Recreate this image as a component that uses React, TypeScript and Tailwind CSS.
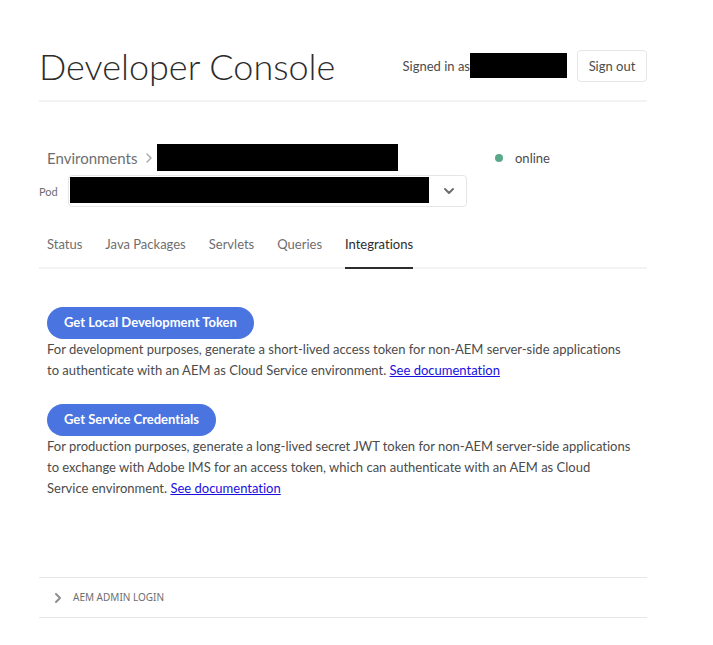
import { ChevronDown, ChevronRight } from 'lucide-react';

const tabs = ['Status', 'Java Packages', 'Servlets', 'Queries', 'Integrations'];

function Header() {
  return (
    <header className="flex items-center justify-between border-b-2 border-[#f3f3f3] pt-9 pb-1">
      <h1 className="text-[36px] leading-[60px] font-light text-[#2c2c2c]">
        Developer Console
      </h1>
      <div className="flex items-center">
        <span>Signed in as</span>
        <span className="mb-[2px] h-[25px] w-[97px] bg-black" />
        <button type="button" className="ml-[10px] h-8 w-[70px] rounded border border-[#e6e6e6]">
          Sign out
        </button>
      </div>
    </header>
  );
}

function Environment() {
  return (
    <section className="pt-[42px]">
      <div className="flex items-center">
        <nav aria-label="Breadcrumb" className="flex w-[456px] items-center pl-2 text-[#6e6e6e]">
          <a href="#environments" className="text-[15px] leading-6">Environments</a>
          <ChevronRight className="ml-1 size-4 text-[#a6a6a6]" strokeWidth={2} />
          <span className="h-[27px] w-[241px] bg-black" />
        </nav>
        <span className="size-2 rounded-full bg-[#5aa88a]" />
        <span className="ml-3 pt-px">online</span>
      </div>
      <div className="mt-1 flex items-center">
        <label htmlFor="pod" className="w-[29px] text-[11px] text-[#6e6e6e]">Pod</label>
        <div className="relative w-[399px]">
          <select id="pod" className="block h-8 w-full appearance-none rounded border border-[#e6e6e6] bg-white" />
          <span className="pointer-events-none absolute top-[2px] left-[2px] h-[26px] w-[359px] bg-black" />
          <ChevronDown className="pointer-events-none absolute top-2 right-[10px] size-4 text-[#6e6e6e]" strokeWidth={3} />
        </div>
      </div>
    </section>
  );
}

function Tabs() {
  return (
    <div role="tablist" className="mt-[14px] flex h-12 gap-[23px] border-b-2 border-[#f3f3f3] pl-2">
      {tabs.map((tab) => (
        <button
          key={tab}
          type="button"
          role="tab"
          aria-selected={tab === 'Integrations'}
          className="-mb-[2px] border-b-2 border-transparent text-[#6e6e6e] aria-selected:border-[#2c2c2c] aria-selected:text-[#2c2c2c]"
        >
          {tab}
        </button>
      ))}
    </div>
  );
}

const actionClass = 'block h-8 rounded-full bg-[#4a75e0] px-[17px] pb-[2px] font-bold text-white';
const linkClass = 'text-[#1a0fe0] underline';

export default function App() {
  return (
    <main className="bg-white pr-[66px] pl-[39px] font-['Lato',sans-serif] text-[13px] leading-[21px] text-[#4b4b4b] [font-variant-ligatures:none]">
      <Header />
      <Environment />
      <Tabs />
      <section className="flex flex-col gap-[23px] pt-[38px] pl-2">
        <div>
          <button type="button" className={actionClass}>Get Local Development Token</button>
          <p>
            For development purposes, generate a short-lived access token for non-AEM server-side applications
            <br />
            to authenticate with an AEM as Cloud Service environment.{' '}
            <a href="#local-token" className={linkClass}>See documentation</a>
          </p>
        </div>
        <div>
          <button type="button" className={actionClass}>Get Service Credentials</button>
          <p>
            For production purposes, generate a long-lived secret JWT token for non-AEM server-side applications
            <br />
            to exchange with Adobe IMS for an access token, which can authenticate with an AEM as Cloud
            <br />
            Service environment.{' '}
            <a href="#credentials" className={linkClass}>See documentation</a>
          </p>
        </div>
      </section>
      <button type="button" className="mt-[78px] flex h-[41px] w-full items-center border-y border-[#e6e6e6] pl-[11px] font-['Noto_Sans',sans-serif] text-[10px] text-[#6e6e6e]">
        <ChevronRight className="mr-[7px] size-4 text-[#8e8e8e]" strokeWidth={3} />
        AEM ADMIN LOGIN
      </button>
    </main>
  );
}
